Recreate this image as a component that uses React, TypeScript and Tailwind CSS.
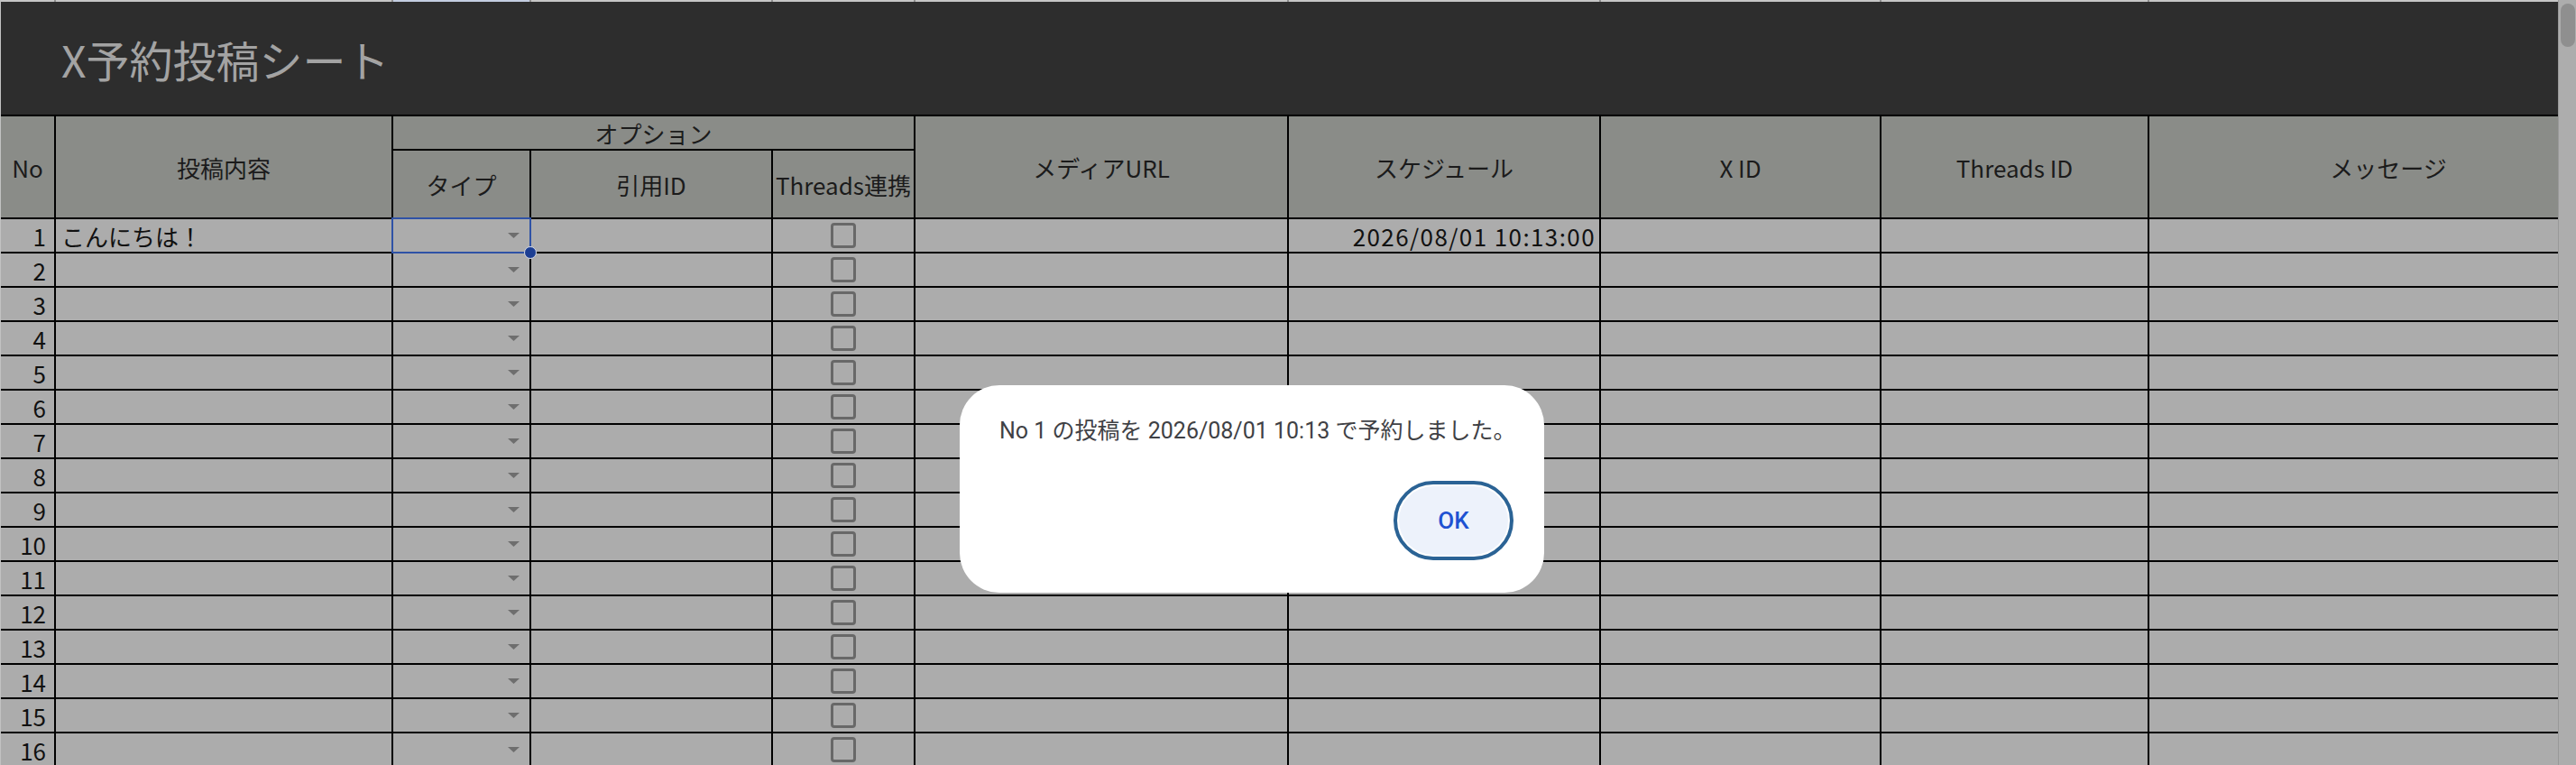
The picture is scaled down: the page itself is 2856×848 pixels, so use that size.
import React from 'react';

const cols =
  'grid grid-cols-[59px_372px_151px_266px_156px_412px_344px_309px_295px_530px] gap-x-[2px]';

const headCell =
  'bg-[#8a8c88] flex items-center justify-center text-[26px] text-[#1b1b1b] whitespace-nowrap';
const dataCell = 'bg-[#acacac] flex items-center text-[26px] text-[#111] whitespace-nowrap';

const rows = Array.from({ length: 16 }, (_, i) => i + 1);

const Caret: React.FC = () => (
  <svg className="absolute right-[11px] top-[15px]" width="13" height="6" viewBox="0 0 13 6">
    <polygon points="0,0 13,0 6.5,6" fill="#6e6e6e" />
  </svg>
);

const Checkbox: React.FC = () => (
  <div className="w-[28px] h-[28px] rounded-[4px] border-[3px] border-[#686868]" />
);

const DataRow: React.FC<{ n: number }> = ({ n }) => {
  const first = n === 1;
  return (
    <>
      <div className={`${dataCell} justify-end pr-[9px]`}>{n}</div>
      <div className={`${dataCell} pl-[6px]`}>{first ? 'こんにちは！' : ''}</div>
      <div className={`${dataCell} relative`}>
        <Caret />
        {first && (
          <>
            <div className="absolute -inset-[2px] border-2 border-[#2f52a6] z-10" />
            <div className="absolute -right-[8px] -bottom-[8px] w-[14px] h-[14px] rounded-full bg-[#1c3e93] border border-[#d8dce8] z-20" />
          </>
        )}
      </div>
      <div className={dataCell} />
      <div className={`${dataCell} justify-center`}>
        <Checkbox />
      </div>
      <div className={dataCell} />
      <div className={`${dataCell} justify-end pr-[4px] tracking-[1.4px]`}>
        {first ? '2026/08/01 10:13:00' : ''}
      </div>
      <div className={dataCell} />
      <div className={dataCell} />
      <div className={dataCell} />
    </>
  );
};

const AlertDialog: React.FC = () => (
  <div className="absolute left-[1064px] top-[427px] w-[648px] h-[230px] rounded-[44px] bg-white flex flex-col justify-between pt-[33px] pl-[44px] pr-[40px] pb-[42px] z-30 font-['Roboto','Noto_Sans_CJK_JP',sans-serif]">
    <p className="text-[25px] leading-[36px] text-[#3f4145] whitespace-nowrap">
      No 1 の投稿を 2026/08/01 10:13 で予約しました。
    </p>
    <div className="flex justify-end">
      <button className="w-[121px] h-[76px] rounded-full bg-[#edf2fb] outline-[4px] outline-solid outline-[#2b6395] outline-offset-2 text-[26px] font-medium text-[#1f52d2]">
        OK
      </button>
    </div>
  </div>
);

export default function App() {
  return (
    <div className="relative w-[2856px] h-[848px] overflow-hidden flex bg-[#acacac] font-['Noto_Sans_CJK_JP',sans-serif]">
      <div className="w-[2836px] overflow-hidden border-l border-[#c2c2c2]">
        <div className="w-[2913px]">
          {/* column header strip of the sheet */}
          <div className={`${cols} h-[2px] bg-[#8e8e8e]`}>
            <div className="bg-[#c6c6c6]" />
            <div className="bg-[#c6c6c6]" />
            <div className="bg-[#c3cde0]" />
            <div className="bg-[#c6c6c6]" />
            <div className="bg-[#c6c6c6]" />
            <div className="bg-[#c6c6c6]" />
            <div className="bg-[#c6c6c6]" />
            <div className="bg-[#c6c6c6]" />
            <div className="bg-[#c6c6c6]" />
            <div className="bg-[#c6c6c6]" />
          </div>

          <div className="h-[125px] bg-[#2d2d2d] flex items-center pl-[67px]">
            <h1 className="text-[48px] leading-none text-[#a3a3a3] whitespace-nowrap">X予約投稿シート</h1>
          </div>

          <div
            className={`${cols} gap-y-[2px] pt-[2px] bg-black grid-rows-[36px_74px] auto-rows-[36px]`}
          >
            <div className={`${headCell} row-span-2`}>No</div>
            <div className={`${headCell} row-span-2`}>投稿内容</div>
            <div className={`${headCell} col-span-3`}>オプション</div>
            <div className={`${headCell} row-span-2`}>メディアURL</div>
            <div className={`${headCell} row-span-2`}>スケジュール</div>
            <div className={`${headCell} row-span-2`}>X ID</div>
            <div className={`${headCell} row-span-2`}>Threads ID</div>
            <div className={`${headCell} row-span-2`}>メッセージ</div>
            <div className={headCell}>タイプ</div>
            <div className={headCell}>引用ID</div>
            <div className={headCell}>Threads連携</div>

            {rows.map((n) => (
              <DataRow key={n} n={n} />
            ))}
          </div>
        </div>
      </div>

      {/* scrollbar */}
      <div className="w-[20px] shrink-0 bg-[#adadad] border-l border-[#999] pt-[4px] pl-[2px]">
        <div className="w-[16px] h-[48px] rounded-full bg-[#8f8f8f]" />
      </div>

      <AlertDialog />
    </div>
  );
}
